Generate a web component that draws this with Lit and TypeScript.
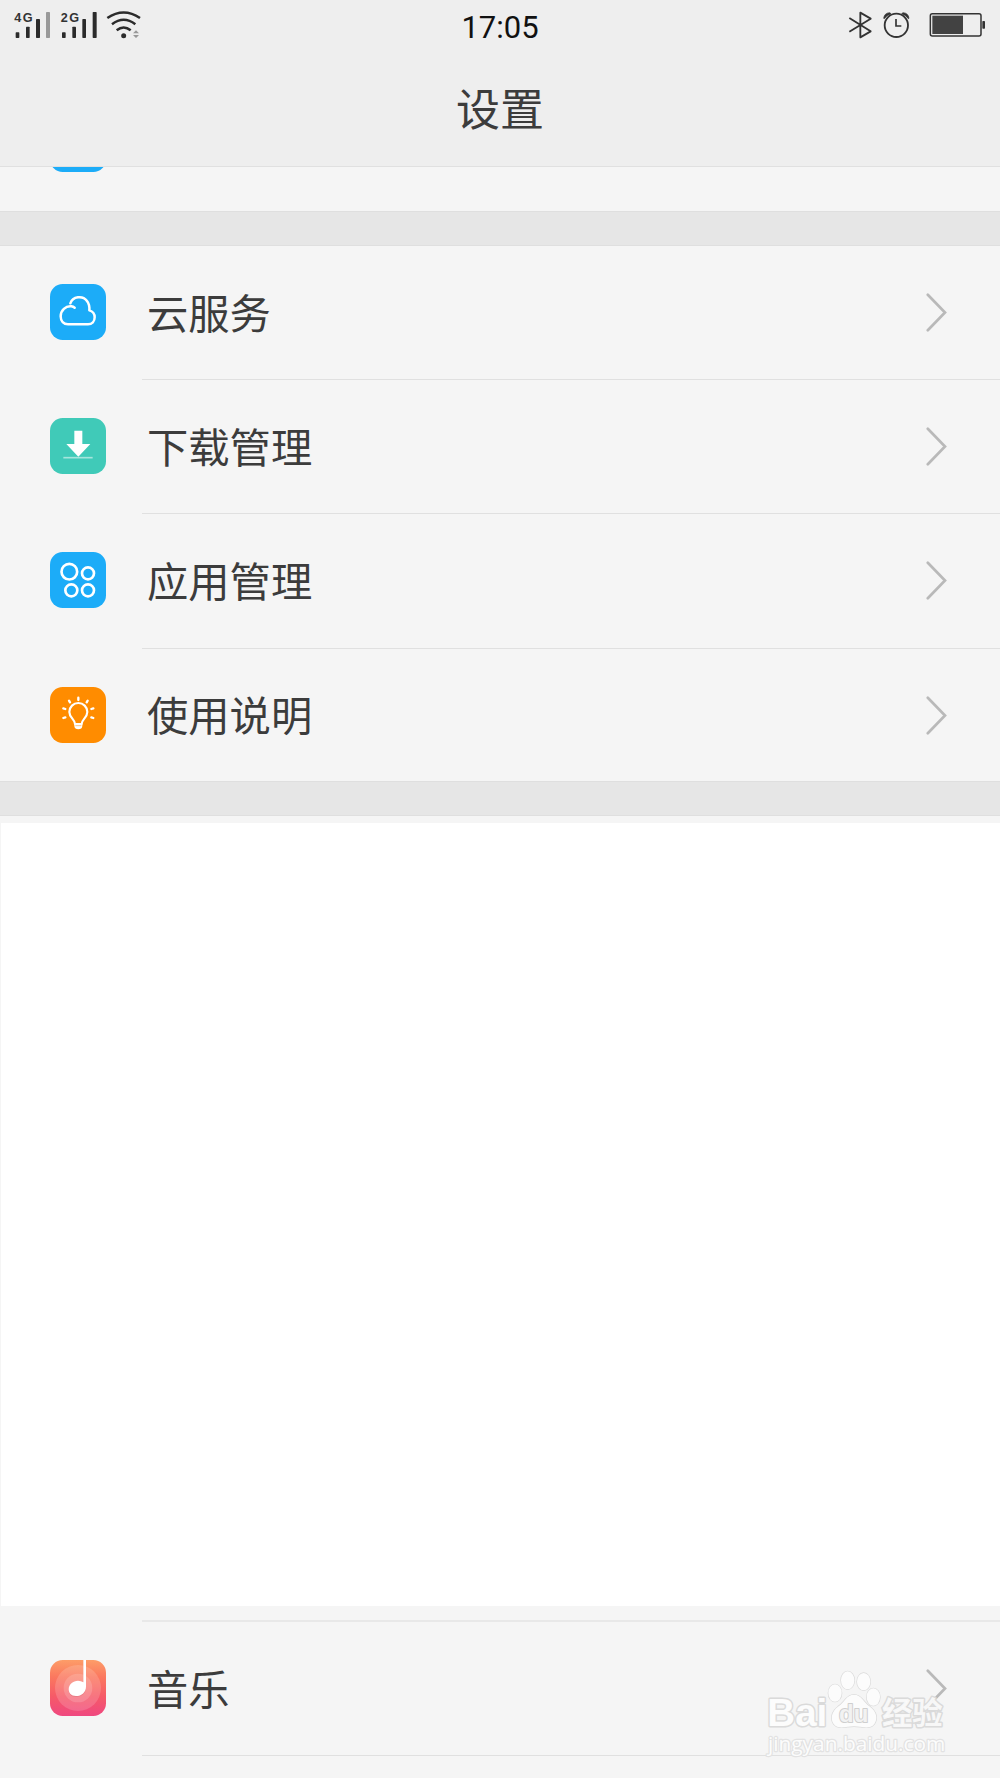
import { LitElement, html, svg, css, type TemplateResult } from "lit";
import { customElement, property } from "lit/decorators.js";

/* Icon art is drawn on a 168-unit tile (56px at 3 units per pixel). */
const cloud = svg`
  <rect width="168" height="168" rx="38" fill="#1cacf8"/>
  <path d="M61 58C68 37 98 33 111 51C118 60 119 68 118 79C129 82 134 90 134 100C134 112 126 121 114 121H54C41 121 32 111 32 97C32 80 47 65 64 67Q70 68 74 71"
    fill="none" stroke="#fff" stroke-width="7.5" stroke-linecap="round" stroke-linejoin="round"/>`;

const download = svg`
  <rect width="168" height="168" rx="38" fill="#40cab8"/>
  <path d="M73 38H97V78H121L85 116L49 78H73Z" fill="#fff"/>
  <path d="M40 119H128" stroke="#a5e5dc" stroke-width="5"/>`;

const apps = svg`
  <rect width="168" height="168" rx="38" fill="#1cacf8"/>
  <g fill="none" stroke="#fff" stroke-width="8">
    <circle cx="58" cy="59" r="23.5"/><circle cx="114" cy="64" r="18"/>
    <circle cx="64" cy="115" r="18"/><circle cx="114" cy="115" r="18"/>
  </g>`;

const bulb = svg`
  <rect width="168" height="168" rx="38" fill="#ff8c00"/>
  <path d="M75 111C75 97 58 92 58 75A27 27 0 0 1 112 75C112 92 95 97 95 111Z" fill="none" stroke="#fff" stroke-width="6.5" stroke-linejoin="round"/>
  <path d="M73 110H97V117Q96 127 85 127Q74 127 73 117Z" fill="#fff"/>
  <path d="M76 116H94" stroke="#ff8c00" stroke-width="1.5"/>
  <path d="M85 32V39M57 41L60 46M113 41L110 46M40 64L46 66M130 64L124 66M40 93L46 91M130 93L124 91" stroke="#fff" stroke-width="7" stroke-linecap="round"/>`;

const music = svg`
  <defs><linearGradient id="m" x1="0" y1="0" x2="0" y2="1">
    <stop offset="0" stop-color="#fd9d68"/><stop offset=".3" stop-color="#fb785f"/>
    <stop offset=".65" stop-color="#f65a68"/><stop offset="1" stop-color="#ef4880"/>
  </linearGradient></defs>
  <rect width="168" height="168" rx="38" fill="url(#m)"/>
  <circle cx="84" cy="84" r="69" fill="#fff" opacity=".16"/>
  <circle cx="84" cy="84" r="43" fill="#fff" opacity=".16"/>
  <path d="M100 0H108V84C108 99 95 111 78 111C63 111 56 102 56 90C56 75 69 63 84 63Q94 63 100 68Z" fill="#b04050" opacity=".2"/>
  <path d="M100 0H108V80C108 96 95 108 78 108C63 108 56 99 56 88C56 74 69 62 84 62Q94 62 100 67Z" fill="#fff"/>`;

@customElement("setting-row")
class SettingRow extends LitElement {
  @property() label = "";
  @property({ attribute: false }) icon: TemplateResult | null = null;

  static styles = css`
    :host { display: flex; align-items: center; box-sizing: border-box; height: 134.2px; padding: 0 53px 2px 50px; }
    .icon { width: 56px; height: 56px; flex: none; }
    .label { flex: 1; margin-left: 41px; padding-bottom: 3px; font-size: 41.3px; line-height: 60px; white-space: nowrap; }
    .arrow { width: 21px; height: 39px; flex: none; padding-top: 1px; }
  `;

  render() {
    return html`
      <svg class="icon" viewBox="0 0 168 168">${this.icon}</svg>
      <span class="label">${this.label}</span>
      <svg class="arrow" viewBox="0 0 21 39"><path d="M1.8 1.8L19 19.5L1.8 37.2" fill="none" stroke="#b9b9b9" stroke-width="2.7" stroke-linecap="round"/></svg>
    `;
  }
}

@customElement("app-root")
class AppRoot extends LitElement {
  static styles = css`
    :host {
      display: flex; flex-direction: column; position: relative; overflow: hidden;
      width: 1000px; height: 1778px; background: #f5f5f5; color: #3c3c3c;
      font-family: "Noto Sans CJK SC", sans-serif;
    }
    .header { height: 167px; flex: none; background: #eee; border-bottom: 1px solid #e0e0e0; box-sizing: border-box; }
    .status { display: grid; grid-template-columns: 1fr auto 1fr; height: 50px; }
    .status .right { justify-self: end; }
    .time { font: 31px/56px Roboto, sans-serif; color: #111; }
    .title { margin: 0; text-align: center; font-size: 44px; font-weight: 400; line-height: 64px; padding-top: 25px; }
    .peek { height: 44px; flex: none; padding-left: 50px; overflow: hidden; display: flex; }
    .peek svg { display: block; width: 56px; height: 5px; }
    .gap { height: 35px; flex: none; box-sizing: border-box; background: #e6e6e6; border-top: 1px solid #dfdfdf; border-bottom: 1px solid #dfdfdf; }
    .line { height: 1px; margin: -1px 0 0 142px; background: #e0e0e0; flex: none; }
    .line.thick { height: 2px; margin-top: 14px; background: #e8e8e8; }
    .group { display: flex; flex-direction: column; height: 535px; flex: none; }
    setting-row { flex: none; }
    .blank { height: 783px; flex: none; margin: 7px 0 0 1px; background: #fff; }
    .mark { position: absolute; left: 750px; top: 1660px; width: 220px; height: 104px; }
  `;

  render() {
    return html`
      <div class="header">
        <div class="status">
          <svg width="160" height="50" viewBox="0 0 480 150">
            <g font-family="Liberation Sans" font-weight="700" font-size="38" fill="#333">
              <text x="43" y="65" textLength="55">4G</text>
              <text x="182" y="65" textLength="55">2G</text>
            </g>
            <g fill="#2b2b2b">
              <rect x="47" y="97" width="11" height="17" rx="2"/><rect x="78" y="80" width="11" height="34" rx="2"/>
              <rect x="108" y="57" width="12" height="57" rx="2"/><rect x="138" y="36" width="12" height="78" rx="2" fill="#999"/>
              <rect x="186" y="97" width="11" height="17" rx="2"/><rect x="217" y="80" width="11" height="34" rx="2"/>
              <rect x="247" y="57" width="11" height="57" rx="2"/><rect x="278" y="36" width="12" height="78" rx="2"/>
              <circle cx="371" cy="107" r="7.5"/>
              <path d="M408 91L417 100H399ZM408 114L399 105H417Z" fill="#999"/>
            </g>
            <path d="M322 54Q371 21 420 54M336 73Q371 46 406 73M350 91Q371 74 392 91" fill="none" stroke="#2b2b2b" stroke-width="7.5"/>
          </svg>
          <span class="time">17:05</span>
          <svg class="right" width="170" height="50" viewBox="0 0 510 150">
            <path d="M58 54L122 94L91 112V38L122 56L58 95" fill="none" stroke="#333" stroke-width="5.5" stroke-linejoin="round"/>
            <path d="M161 55Q163 39 179 38L183 41Q170 45 163 56ZM237 55Q235 39 219 38L215 41Q228 45 235 56Z" fill="#333" stroke="#333" stroke-width="2"/>
            <circle cx="199" cy="76" r="35" fill="none" stroke="#333" stroke-width="5.5"/>
            <path d="M198 57V78H214" fill="none" stroke="#333" stroke-width="5"/>
            <rect x="301" y="41" width="152" height="67" rx="6" fill="none" stroke="#333" stroke-width="4.5"/>
            <rect x="307" y="47" width="92" height="55" fill="#424242"/>
            <rect x="457" y="63" width="8" height="23" rx="2" fill="#333"/>
          </svg>
        </div>
        <h1 class="title">设置</h1>
      </div>
      <div class="peek"><svg viewBox="0 51 56 5"><rect width="56" height="56" rx="12.7" fill="#1cacf8"/></svg></div>
      <div class="gap"></div>
      <div class="group">
        <setting-row label="云服务" .icon=${cloud}></setting-row>
        <div class="line"></div>
        <setting-row label="下载管理" .icon=${download}></setting-row>
        <div class="line"></div>
        <setting-row label="应用管理" .icon=${apps}></setting-row>
        <div class="line"></div>
        <setting-row label="使用说明" .icon=${bulb}></setting-row>
      </div>
      <div class="gap"></div>
      <div class="blank"></div>
      <div class="line thick"></div>
      <setting-row label="音乐" .icon=${music}></setting-row>
      <div class="line"></div>
      <svg class="mark" viewBox="0 210 660 312">
        <g fill="#fcfcfc" stroke="#dadada" stroke-width="9" paint-order="stroke" stroke-linejoin="round">
          <text x="52" y="408" font-family="Liberation Sans" font-weight="700" font-size="118" textLength="180" lengthAdjust="spacingAndGlyphs">Bai</text>
          <g stroke-width="4">
            <ellipse cx="293" cy="271" rx="20" ry="27"/><ellipse cx="341" cy="275" rx="20" ry="26"/>
            <ellipse cx="255" cy="309" rx="20" ry="26"/><ellipse cx="370" cy="321" rx="20" ry="26"/>
            <path d="M312 314C334 314 340 336 360 350C380 365 384 386 373 402C359 420 336 409 312 409C288 409 265 420 251 402C240 386 245 364 264 350C284 336 290 314 312 314Z"/>
          </g>
          <text x="267" y="397" font-family="Liberation Sans" font-weight="700" font-size="72" fill="#f2f2f2" stroke="#cfcfcf" stroke-width="6" textLength="88" lengthAdjust="spacingAndGlyphs">du</text>
          <text x="396" y="401" font-family="Noto Sans CJK SC" font-weight="700" font-size="91" fill-opacity=".9">经验</text>
          <text x="54" y="482" font-family="Open Sans" font-size="60" stroke="#e2e2e2" stroke-width="7" textLength="532" lengthAdjust="spacingAndGlyphs">jingyan.baidu.com</text>
        </g>
      </svg>
    `;
  }
}
